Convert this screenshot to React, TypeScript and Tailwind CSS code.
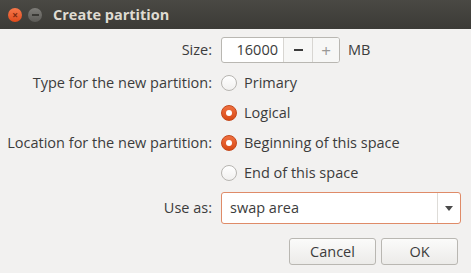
import React from "react";

const font = { fontFamily: '"Open Sans", "DejaVu Sans", sans-serif' };

function Radio({ checked, label }: { checked?: boolean; label: string }) {
  return (
    <div className="flex items-center gap-[7px]">
      {checked ? (
        <span className="w-[16px] h-[16px] rounded-full bg-gradient-to-b from-[#f0703f] to-[#d84a14] border border-[#c4471a] flex items-center justify-center">
          <span className="w-[6px] h-[6px] rounded-full bg-white" />
        </span>
      ) : (
        <span className="w-[16px] h-[16px] rounded-full bg-gradient-to-b from-[#ffffff] to-[#f1f0ef] border border-[#b7b5b1]" />
      )}
      <span>{label}</span>
    </div>
  );
}

function Row({ label, children, h }: { label?: string; children: React.ReactNode; h: string }) {
  return (
    <div className={`flex items-center ${h}`}>
      <div className="w-[213px] pr-[1px] text-right shrink-0 whitespace-nowrap">{label}</div>
      <div className="pl-[8px] flex-1 flex items-center">{children}</div>
    </div>
  );
}

export default function App() {
  return (
    <div className="w-[471px] h-[273px] bg-[#f2f1f0] text-[#3c3c3c] text-[14.5px] overflow-hidden" style={font}>
      {/* title bar */}
      <div className="h-[29px] bg-gradient-to-b from-[#4a4944] to-[#3b3a36] flex items-center pl-[8px]">
        <span className="w-[14px] h-[14px] rounded-full bg-gradient-to-b from-[#f6784a] to-[#e04a1a] flex items-center justify-center text-[#7a2a10] text-[10px] leading-none font-bold">
          ×
        </span>
        <span className="ml-[6px] w-[14px] h-[14px] rounded-full bg-gradient-to-b from-[#7e7d79] to-[#5c5b57] flex items-center justify-center">
          <span className="w-[7px] h-[2px] bg-[#3a3935]" />
        </span>
        <span className="ml-[11px] text-[#dfdbd2] font-bold text-[14.5px]">Create partition</span>
      </div>

      <div className="mt-[8px]">
        <Row label="Size:" h="h-[26px]">
          <div className="flex h-[26px] border border-[#b9b7b2] rounded-[3px] bg-white overflow-hidden">
            <div className="w-[61px] flex items-center justify-end pr-[5px]">16000</div>
            <div className="w-[29px] border-l border-[#d8d6d2] flex items-center justify-center bg-[#f7f7f6]">
              <span className="w-[9px] h-[2px] bg-[#3c3c3c]" />
            </div>
            <div className="w-[27px] border-l border-[#d8d6d2] flex items-center justify-center bg-[#f7f7f6] text-[#9a9996] text-[17px] leading-none">
              +
            </div>
          </div>
          <span className="ml-[8px]">MB</span>
        </Row>
        <div className="mt-[5px]">
          <Row label="Type for the new partition:" h="h-[30px]">
            <Radio label="Primary" />
          </Row>
          <Row h="h-[30px]">
            <Radio checked label="Logical" />
          </Row>
          <Row label="Location for the new partition:" h="h-[30px]">
            <Radio checked label="Beginning of this space" />
          </Row>
          <Row h="h-[30px]">
            <Radio label="End of this space" />
          </Row>
        </div>
        <div className="mt-[4px]">
          <Row label="Use as:" h="h-[32px]">
            <div className="flex h-[32px] w-[240px] border border-[#df8b68] rounded-[3px] bg-white overflow-hidden">
              <div className="flex-1 flex items-center pl-[8px]">swap area</div>
              <div className="w-[23px] border-l border-[#dedcd8] flex items-center justify-center">
                <svg width="8" height="5" viewBox="0 0 8 5">
                  <path d="M0 0 L8 0 L4 5 Z" fill="#4a4a4a" />
                </svg>
              </div>
            </div>
          </Row>
        </div>
        <div className="mt-[14px] flex justify-end pr-[13px] gap-[5px]">
          <button className="w-[87px] h-[27px] border border-[#b9b7b2] rounded-[3px] bg-gradient-to-b from-[#fbfbfa] to-[#ecebe9]">
            Cancel
          </button>
          <button className="w-[77px] h-[27px] border border-[#b9b7b2] rounded-[3px] bg-gradient-to-b from-[#fbfbfa] to-[#ecebe9]">
            OK
          </button>
        </div>
      </div>
    </div>
  );
}
